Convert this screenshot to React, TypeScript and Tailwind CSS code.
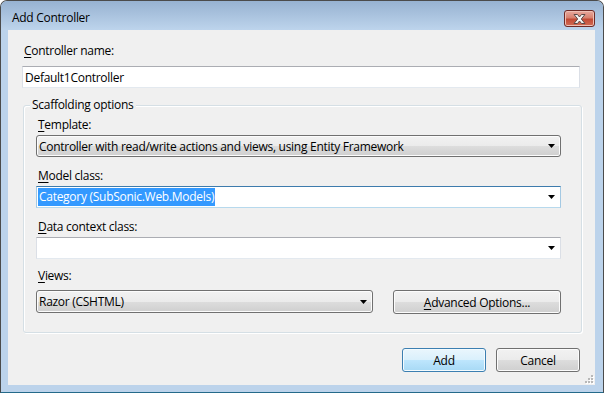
import React from "react";

const Arrow = () => (
  <svg width="7" height="4" viewBox="0 0 7 4" className="shrink-0">
    <path d="M0 0H7L3.5 4Z" fill="#000" />
  </svg>
);

function U({ children }: { children: React.ReactNode }) {
  return <span className="underline decoration-1 underline-offset-[2px]">{children}</span>;
}

const btnGray =
  "border border-[#707070] rounded-[3px] bg-[linear-gradient(to_bottom,#f2f2f2_0%,#ebebeb_50%,#dddddd_50%,#cfcfcf_100%)] shadow-[inset_0_0_0_1px_#fcfcfc]";
const btnBlue =
  "border border-[#3c7fb1] rounded-[3px] bg-[linear-gradient(to_bottom,#eaf6fd_0%,#d9f0fc_50%,#bee6fd_50%,#a7d9f5_100%)] shadow-[inset_0_0_0_1px_#f4fbfe]";

export default function App() {
  return (
    <div className="w-[604px] h-[393px] overflow-hidden bg-white">
      <div className="w-[604px] h-[393px] flex flex-col border border-[#4b4b4b] border-b-[#246a8a] rounded-t-[7px] bg-[#bcd3eb] text-[12px] leading-[15px] tracking-[-0.28px] text-black font-['Open_Sans',sans-serif]">
        {/* Title bar */}
        <div className="h-[29px] shrink-0 flex items-start justify-between rounded-t-[6px] bg-[linear-gradient(to_bottom,#97b2d1,#bdd4ec)] pl-[11px] pr-[8px]">
          <span className="mt-[9px]">Add Controller</span>
          <div className="mt-[9px] w-[31px] h-[17px] rounded-[3px] border border-[#6e2a26] bg-[linear-gradient(to_bottom,#e8a99e_0%,#d7816f_45%,#c24a35_55%,#d26c55_100%)] shadow-[inset_0_0_0_1px_#eebfb4] flex items-center justify-center">
            <svg width="13" height="10" viewBox="0 0 13 10">
              <path
                d="M1 0.5H4.5L6.5 3L8.5 0.5H12L8.3 5L12 9.5H8.5L6.5 7L4.5 9.5H1L4.7 5Z"
                fill="#f4f4f4"
                stroke="#5b4a48"
                strokeWidth="1"
                strokeLinejoin="round"
              />
            </svg>
          </div>
        </div>

        {/* Client area */}
        <div className="relative ml-[7px] mr-[8px] h-[355px] shrink-0 bg-[#f0f0f0] flex flex-col">
          <div className="mt-[13px] ml-[16px]">
            <U>C</U>ontroller name:
          </div>
          <div className="mt-[8px] ml-[14px] w-[558px] h-[22px] bg-white border border-[#dbdfe6] border-t-[#abadb3] border-b-[#e3e9ef] flex items-center pl-[2px]">
            Default1Controller
          </div>

          {/* Group box */}
          <div className="relative mt-[17px] ml-[15px] w-[559px] h-[228px] border border-[#d5dfe5] rounded-[3px] shadow-[1px_1px_0_#ffffff,inset_1px_1px_0_#ffffff] flex flex-col pl-[12px] pr-[20px]">
            <span className="absolute -top-[9px] left-[6px] px-[2px] bg-[#f0f0f0]">Scaffolding options</span>

            <div className="mt-[11px] ml-[2px]">
              <U>T</U>emplate:
            </div>
            <div className={`mt-[3px] h-[22px] flex items-center justify-between pl-[2px] pr-[5px] ${btnGray}`}>
              <span>Controller with read/write actions and views, using Entity Framework</span>
              <Arrow />
            </div>

            <div className="mt-[11px] ml-[2px]">
              <U>M</U>odel class:
            </div>
            <div className="mt-[3px] h-[22px] flex items-center justify-between bg-white border border-[#a4c9e3] border-t-[#3d7bad] border-b-[#b7d9ed] pl-[1px] pr-[5px]">
              <span className="inline-block h-[18px] leading-[18px] bg-[#3399ff] text-white px-[1px]">Category (SubSonic.Web.Models)</span>
              <Arrow />
            </div>

            <div className="mt-[11px] ml-[2px]">
              <U>D</U>ata context class:
            </div>
            <div className="mt-[3px] h-[22px] flex items-center justify-end bg-white border border-[#dbdfe6] border-t-[#abadb3] border-b-[#e3e9ef] pr-[5px]">
              <Arrow />
            </div>

            <div className="mt-[9px] ml-[2px]">
              <U>V</U>iews:
            </div>
            <div className="mt-[7px] flex items-start justify-between">
              <div className={`w-[337px] h-[23px] flex items-center justify-between pl-[2px] pr-[5px] ${btnGray}`}>
                <span>Razor (CSHTML)</span>
                <Arrow />
              </div>
              <div className={`w-[168px] h-[24px] flex items-center justify-center ${btnGray}`}>
                <span>
                  <U>A</U>dvanced Options...
                </span>
              </div>
            </div>
          </div>

          {/* Buttons */}
          <div className="mt-[15px] flex justify-end gap-[10px] pr-[15px]">
            <div className={`w-[84px] h-[24px] flex items-center justify-center ${btnBlue}`}>Add</div>
            <div className={`w-[84px] h-[24px] flex items-center justify-center ${btnGray}`}>Cancel</div>
          </div>

          {/* Size grip */}
          <svg className="absolute right-[1px] bottom-[1px]" width="10" height="10" viewBox="0 0 10 10">
            {[
              [7, 1],
              [4, 4],
              [7, 4],
              [1, 7],
              [4, 7],
              [7, 7],
            ].map(([x, y], i) => (
              <g key={i}>
                <rect x={x + 1} y={y + 1} width="2" height="2" fill="#ffffff" />
                <rect x={x} y={y} width="2" height="2" fill="#b8b8b8" />
              </g>
            ))}
          </svg>
        </div>
      </div>
    </div>
  );
}
